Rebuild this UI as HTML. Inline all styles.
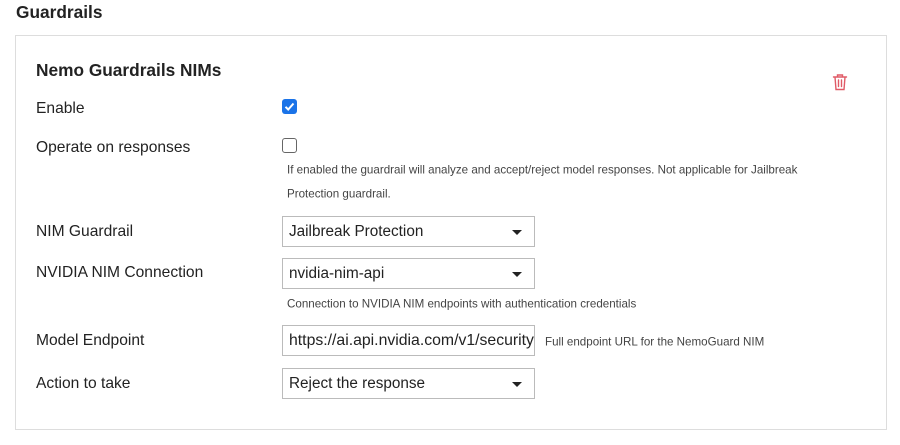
<!DOCTYPE html>
<html><head><style>
body{margin:0;width:900px;height:445px;background:#fff;font-family:"Liberation Sans",sans-serif;color:#222;position:relative;overflow:hidden}
.a{position:absolute;white-space:nowrap}
.h{font-weight:bold;font-size:17px}
.l{font-size:15.6px;transform:translateY(-50%)}
.s{font-size:11.6px;color:#444;transform:translateY(-50%)}
.box{position:absolute;left:15px;top:35px;width:870px;height:393px;border:1px solid #ddd}
.sel{position:absolute;left:282px;border:1px solid #bbb;font-size:15.3px;line-height:29px;padding-left:6px;box-sizing:border-box;width:253px;height:31px;overflow:hidden;white-space:nowrap}
.sel .c{position:absolute;right:12px;top:13px;width:0;height:0;border-left:5px solid transparent;border-right:5px solid transparent;border-top:5px solid #222}
</style></head><body>
<div class="a h" style="left:16px;top:2px;font-size:17.3px">Guardrails</div>
<div class="box"></div>
<div class="a h" style="left:36px;top:60px;font-size:17.3px">Nemo Guardrails NIMs</div>
<svg class="a" style="left:832px;top:73px" width="16" height="18" viewBox="0 0 16 18" fill="none" stroke="#e05a66" stroke-width="1.4" stroke-linecap="round"><path d="M1.5 4h13M5.5 4V2h5v2M3 4l1 12.5h8L13 4M6.5 7v6.5M9.5 7v6.5"/></svg>
<div class="a l" style="left:36px;top:109px">Enable</div>
<div class="a" style="left:282px;top:99px;width:15px;height:15px;background:#1a73e8;border-radius:3px"><svg width="15" height="15"><path d="M3.5 7.8l2.7 2.7 5.3-6" stroke="#fff" stroke-width="2" fill="none"/></svg></div>
<div class="a l" style="left:36px;top:148px">Operate on responses</div>
<div class="a" style="left:282px;top:138px;width:13px;height:13px;border:1px solid #666;border-radius:3px"></div>
<div class="a s" style="left:287px;top:170px">If enabled the guardrail will analyze and accept/reject model responses. Not applicable for Jailbreak</div>
<div class="a s" style="left:287px;top:194px">Protection guardrail.</div>
<div class="a l" style="left:36px;top:232px">NIM Guardrail</div>
<div class="sel" style="top:216px">Jailbreak Protection<span class="c"></span></div>
<div class="a l" style="left:36px;top:273px">NVIDIA NIM Connection</div>
<div class="sel" style="top:258px">nvidia-nim-api<span class="c"></span></div>
<div class="a s" style="left:287px;top:304px">Connection to NVIDIA NIM endpoints with authentication credentials</div>
<div class="a l" style="left:36px;top:341px">Model Endpoint</div>
<div class="sel" style="top:325px;font-size:15.8px">https://ai.api.nvidia.com/v1/security/nvidia</div>
<div class="a s" style="left:545px;top:342px">Full endpoint URL for the NemoGuard NIM</div>
<div class="a l" style="left:36px;top:384px">Action to take</div>
<div class="sel" style="top:368px">Reject the response<span class="c"></span></div>
</body></html>
